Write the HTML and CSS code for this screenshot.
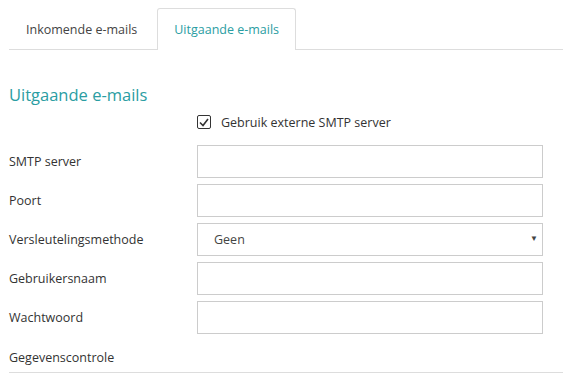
FILE: index.html
```html
<!DOCTYPE html>
<html lang="nl">
<head>
  <meta charset="UTF-8" />
  <title>E-mail instellingen</title>
  <link rel="stylesheet" href="styles.css">
</head>
<body>

  <nav class="tabs">
    <a class="tab">Inkomende e-mails</a>
    <a class="tab active">Uitgaande e-mails</a>
  </nav>

  <section class="panel">
    <h1>Uitgaande e-mails</h1>

    <div class="row check-row">
      <label class="check">
        <span class="box">
          <svg width="10" height="9" viewBox="0 0 10 9"><path d="M1 4.5 L4 7.5 L9 1" fill="none" stroke="#333" stroke-width="1.6"/></svg>
        </span>
        Gebruik externe SMTP server
      </label>
    </div>

    <div class="row">
      <label>SMTP server</label>
      <input type="text">
    </div>
    <div class="row">
      <label>Poort</label>
      <input type="text">
    </div>
    <div class="row">
      <label>Versleutelingsmethode</label>
      <div class="select">Geen <span class="arrow">&#9660;</span></div>
    </div>
    <div class="row">
      <label>Gebruikersnaam</label>
      <input type="text">
    </div>
    <div class="row">
      <label>Wachtwoord</label>
      <input type="password">
    </div>

    <div class="section">Gegevenscontrole</div>
  </section>

</body>
</html>
```

FILE: styles.css
```css
* {
  box-sizing: border-box;
  margin: 0;
  padding: 0;
}

body {
  font-family: 'Open Sans', sans-serif;
  font-size: 12.5px;
  color: #333;
  background: #fff;
  padding: 8px 0 0 9px;
}

.tabs {
  display: flex;
  border-bottom: 1px solid #ddd;
  height: 42px;
}

.tab {
  padding: 0 16px 0 16px;
  line-height: 41px;
  font-size: 12.5px;
  color: #444;
  border: 1px solid transparent;
  border-bottom: none;
  border-radius: 3px 3px 0 0;
  cursor: pointer;
}

.tab.active {
  color: #2a9da2;
  border-color: #ddd;
  background: #fff;
  height: 42px;
  margin-left: 3px;
}

.panel {
  padding-top: 33px;
}

h1 {
  font-size: 16.5px;
  font-weight: 400;
  color: #2a9da2;
  line-height: 24px;
}

.row {
  display: flex;
  align-items: center;
  margin-bottom: 6px;
}

.row label {
  width: 188px;
}

.check-row {
  height: 20px;
  margin-top: 5px;
  margin-bottom: 13px;
}

.check-row .check {
  width: auto;
  margin-left: 188px;
  display: flex;
  align-items: center;
}

.box {
  width: 14px;
  height: 14px;
  border: 1.5px solid #333;
  border-radius: 2px;
  display: inline-flex;
  align-items: center;
  justify-content: center;
  margin-right: 10px;
}

input,
.select {
  width: 346px;
  height: 33px;
  border: 1px solid #ccc;
  font: inherit;
  padding: 0 16px;
}

.select {
  position: relative;
  display: flex;
  align-items: center;
  color: #444;
}

.arrow {
  position: absolute;
  right: 4px;
  top: 8px;
  font-size: 8px;
  color: #444;
}

.section {
  margin-top: 15px;
  padding-bottom: 6px;
  border-bottom: 1px solid #ddd;
}
```
